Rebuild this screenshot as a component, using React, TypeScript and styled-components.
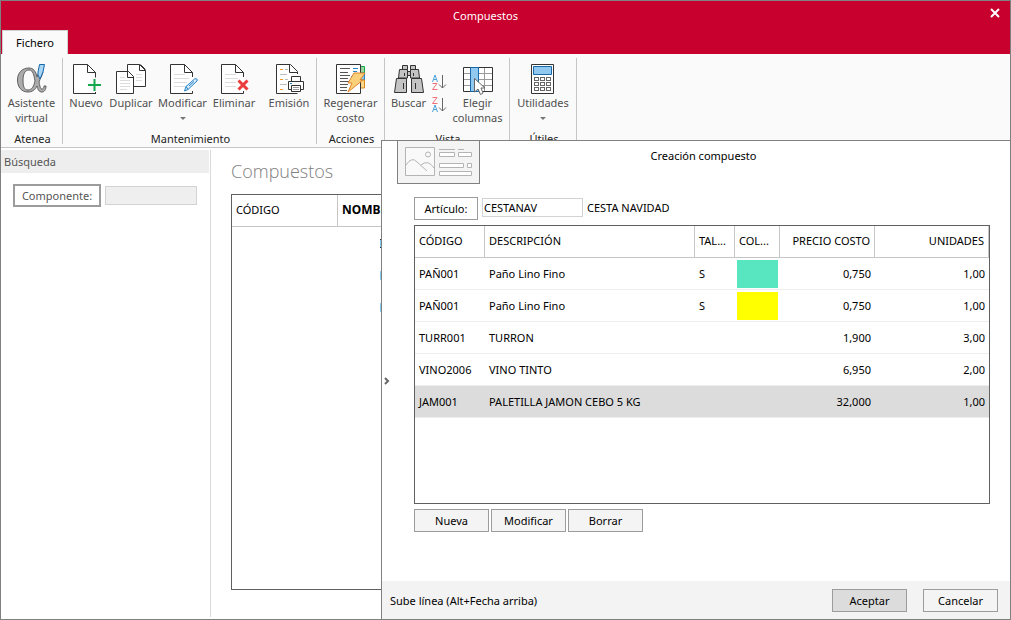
import React from "react";
import styled, { createGlobalStyle, css } from "styled-components";

const Global = createGlobalStyle`
  * { box-sizing: border-box; }
  body { margin: 0; background: #fff; }
  body, button, input { font-family: "Noto Sans", "Open Sans", sans-serif; font-size: 11px; line-height: 15px; color: #000; }
  button { cursor: default; white-space: nowrap; }
`;

const Window = styled.div`
  position: relative;
  display: flex;
  flex-direction: column;
  min-height: 100vh;
  border: 1px solid #808080;
  overflow: hidden;
`;

const TitleBar = styled.header`
  display: grid;
  grid-template-columns: 1fr 40px;
  height: 29px;
  background: #c8002d;
  color: #fff;
`;

const WindowTitle = styled.h1`
  margin: 0;
  font-size: 11px;
  line-height: 30px;
  font-weight: 400;
  text-align: center;
`;

const CloseButton = styled.button`
  display: flex;
  justify-content: center;
  align-items: center;
  padding: 0 0 6px 9px;
  border: 0;
  background: none;
`;

const TabStrip = styled.nav`
  display: flex;
  height: 24px;
  padding-left: 1px;
  background: #c8002d;
`;

const Tab = styled.button`
  width: 66px;
  padding: 0;
  border: 1px solid #d0d0d0;
  border-width: 1px 1px 0;
  background: #fafafa;
`;

const Ribbon = styled.div`
  display: flex;
  height: 94px;
  padding-top: 4px;
  background: #fafafa;
  border-bottom: 1px solid #c6c6c6;
`;

const Group = styled.section<{ $width: number }>`
  display: flex;
  flex-direction: column;
  flex: none;
  width: ${(p) => p.$width}px;
  height: 86px;
  border-right: 1px solid #c6c6c6;
`;

const GroupTools = styled.div<{ $pad?: number }>`
  display: flex;
  flex: 1;
  padding-left: ${(p) => p.$pad || 0}px;
`;

const GroupName = styled.h2`
  height: 13px;
  margin: 0;
  padding-left: 2px;
  font-size: 11px;
  line-height: 15px;
  font-weight: 400;
  text-align: center;
  color: #222;
`;

const Tool = styled.button<{ $width?: number }>`
  display: flex;
  flex-direction: column;
  align-items: center;
  width: ${(p) => (p.$width ? p.$width + "px" : "100%")};
  flex: none;
  padding: 5px 0 0;
  border: 0;
  background: none;
  color: #505050;
`;

const ToolIcon = styled.svg`
  flex: none;
  width: 32px;
  height: 32px;
  overflow: visible;
`;

const Caret = styled.span`
  width: 0;
  margin-top: 7px;
  border: 3px solid transparent;
  border-top-color: #777;
  border-bottom: 0;
`;

const ToolDivider = styled.span`
  width: 1px;
  height: 60px;
  margin: 6px 0 0 3px;
  background: #dcdcdc;
`;

const SortStack = styled.div`
  display: flex;
  flex-direction: column;
  gap: 6px;
  width: 20px;
  padding-top: 16px;
`;

const SortButton = styled.button`
  display: flex;
  padding: 0;
  border: 0;
  background: none;
`;

const Body = styled.div`
  display: flex;
  flex: 1;
  padding: 2px 0;
`;

const SearchPanel = styled.aside`
  flex: none;
  width: 210px;
  padding-right: 1px;
  border-right: 1px solid #d9d9d9;
`;

const PanelTitle = styled.h2`
  margin: 0;
  padding-left: 3px;
  font-size: 11px;
  font-weight: 400;
  line-height: 23px;
  color: #555;
  background: #eee;
`;

const SearchField = styled.div`
  display: flex;
  align-items: center;
  gap: 4px;
  padding: 11px 12px;
`;

const SearchButton = styled.button`
  width: 88px;
  height: 23px;
  padding: 0;
  border: 2px solid #9c9c9c;
  background: #fff;
  color: #555;
`;

const TextInput = styled.input<{ $muted?: boolean }>`
  min-width: 0;
  height: 19px;
  padding: 0 1px;
  border: 1px solid #d3d3d3;
  background: #fff;
  ${(p) =>
    p.$muted
      ? css`
          flex: 1;
          background: #efefef;
        `
      : css`
          width: 101px;
        `}
`;

const Content = styled.main`
  display: flex;
  flex-direction: column;
  flex: 1;
  padding: 8px 20px 27px;
`;

const PageTitle = styled.h2`
  margin: 0 0 9px;
  font-family: "Open Sans", "Noto Sans", sans-serif;
  font-size: 18px;
  line-height: 27px;
  font-weight: 300;
  color: #808080;
`;

const GridFrame = styled.div`
  flex: 1;
  border: 1px solid #606060;
`;

const Table = styled.table`
  width: 100%;
  table-layout: fixed;
  border-collapse: separate;
  border-spacing: 0;
`;

const Th = styled.th<{ $width?: number; $right?: boolean; $bold?: boolean }>`
  width: ${(p) => (p.$width ? p.$width + "px" : "auto")};
  height: 32px;
  padding: 0 4px 2px;
  border-right: 1px solid #c6c6c6;
  border-bottom: 1px solid #c6c6c6;
  font-size: ${(p) => (p.$bold ? 12 : 11)}px;
  font-weight: ${(p) => (p.$bold ? 700 : 400)};
  text-align: ${(p) => (p.$right ? "right" : "left")};
  white-space: nowrap;
  overflow: hidden;
`;

const Row = styled.tr<{ $selected?: boolean }>`
  background: ${(p) => (p.$selected ? "#dcdcdc" : "#fff")};
`;

const Td = styled.td<{ $right?: boolean }>`
  height: 32px;
  padding: 0 4px;
  border-bottom: 1px solid #ededed;
  text-align: ${(p) => (p.$right ? "right" : "left")};
  white-space: nowrap;
`;

const MarkCell = styled.td`
  height: 32px;
  padding: 0 0 0 42px;
`;

const Mark = styled.div<{ $active: boolean }>`
  width: 9px;
  height: 9px;
  border: 1px solid ${(p) => (p.$active ? "#1c3a4c" : "#8fd3f5")};
  border-width: 1px 0;
  background: #7cc8f0;
`;

const Swatch = styled.div<{ $color: string }>`
  height: 28px;
  margin: 0 -2px;
  background: ${(p) => p.$color};
`;

const Drawer = styled.section`
  position: absolute;
  top: 139px;
  right: 0;
  bottom: 0;
  left: 380px;
  display: flex;
  flex-direction: column;
  border: 1px solid #808080;
  border-width: 1px 0 0 1px;
  background: #fff;
`;

const DrawerHead = styled.header`
  display: grid;
  grid-template-columns: 83px 1fr 83px;
  padding: 0 0 0 15px;
`;

const Thumb = styled.div`
  display: flex;
  justify-content: center;
  align-items: center;
  height: 43px;
  border: 1px solid #808080;
  border-top: 0;
  background: #f4f4f4;
`;

const DrawerTitle = styled.h2`
  margin: 0;
  padding: 7px 0 0;
  font-size: 11px;
  line-height: 15px;
  font-weight: 400;
  text-align: center;
`;

const DrawerBody = styled.div`
  display: grid;
  grid-template-columns: 32px 1fr;
  flex: 1;
  padding-right: 20px;
`;

const Collapse = styled.button`
  align-self: center;
  width: 10px;
  height: 24px;
  padding: 0 0 4px;
  border: 0;
  background: none;
`;

const Form = styled.div`
  display: flex;
  flex-direction: column;
  padding: 13px 0 49px;
`;

const ItemField = styled.div`
  display: flex;
  align-items: flex-start;
  gap: 4px;
  height: 23px;
  margin-bottom: 5px;

  ${TextInput} {
    margin-top: 1px;
  }
`;

const ItemName = styled.span`
  line-height: 21px;
`;

const Action = styled.button<{ $width?: number; $tone?: string }>`
  width: ${(p) => p.$width || 75}px;
  height: 23px;
  padding: 0;
  border: 1px solid #9c9c9c;
  background: ${(p) => p.$tone || "#f4f4f4"};
`;

const Actions = styled.div<{ $gap: number }>`
  display: flex;
  gap: ${(p) => p.$gap}px;
`;

const LineActions = styled(Actions)`
  margin-top: 5px;
`;

const DrawerFoot = styled.footer`
  display: flex;
  justify-content: space-between;
  align-items: center;
  height: 38px;
  padding: 0 12px 0 8px;
  background: #f3f3f3;
`;

const AlphaIcon = () => (
  <ToolIcon viewBox="0 0 32 32" aria-hidden="true">
    <path
      d="M13 5C6 5 1.500 10 1.500 17s4 12 10.500 12c4 0 7-2 9-6 1 4 2 6 5 6 2 0 4-2 4-6h-2c0 2-1 3-2 3-2 0-2-3-3-7 1-3 3-6 4-10h-4l-2 5c-1-6-4-9-8-9Z M13 7c4 0 5 5 6 11-1 5-3 9-7 9-4 0-5-4-5-10S9 7 13 7Z"
      fill="#acacac"
      stroke="#5f5f5f"
      fillRule="evenodd"
    />
    <path d="M23.500 1.500H28.500L27 9L24 16L22 12V9Z" fill="#a8d4f5" stroke="#1769aa" />
  </ToolIcon>
);

const NewIcon = () => (
  <ToolIcon viewBox="0 0 32 32" aria-hidden="true">
    <path d="M25.500 30.500H3.500V1.500H17.500L25.500 9.500V14.500" fill="#fff" stroke="#333" />
    <path d="M17.500 1.500V9.500H25.500M25.500 29V31" fill="none" stroke="#333" />
    <path d="M24.500 15V29M17 22H31" stroke="#fafafa" strokeWidth="4" />
    <path d="M24.500 16V28M18 22H31" stroke="#12a84b" strokeWidth="2" />
  </ToolIcon>
);

const CopyIcon = () => (
  <ToolIcon viewBox="0 0 32 32" aria-hidden="true">
    <path d="M12.500 1.500H24.500L30.500 7.500V23.500H12.500Z" fill="#fff" stroke="#333" />
    <path d="M24.500 1.500V7.500H30.500M25.500 1.500L30.500 6.500" fill="none" stroke="#333" />
    <path d="M21 11.500H27M21 14.500H27M21 17.500H27" stroke="#dcdcdc" />
    <path d="M1.500 8.500H13.500L18.500 13.500V30.500H1.500Z" fill="#fff" stroke="#333" />
    <path d="M12.500 8.500V14.500H18.500M13.500 8.500L18.500 13.500" fill="none" stroke="#333" />
    <path d="M5 14.500H10M5 17.500H15M5 20.500H15M5 23.500H15M5 26.500H12" stroke="#dcdcdc" />
  </ToolIcon>
);

const EditIcon = () => (
  <ToolIcon viewBox="0 0 32 32" aria-hidden="true">
    <path d="M25.500 14V9.500L17.500 1.500H3.500V30.500H25.500V28" fill="#fff" stroke="#333" />
    <path d="M17.500 1.500V9.500H25.500" fill="none" stroke="#333" />
    <path d="M7 11.500H18M7 15.500H22M7 19.500H20M7 23.500H18" stroke="#dcdcdc" />
    <path d="M17.500 28L19 23.500L27.500 16Q31 15 30 18L21 26.500Z" fill="#d8ecfb" stroke="#2583c4" />
    <path d="M19 23.500L21 26.500M22 23L27 18.500" stroke="#2583c4" />
  </ToolIcon>
);

const DeleteIcon = () => (
  <ToolIcon viewBox="0 0 32 32" aria-hidden="true">
    <path d="M25.500 14V9.500L17.500 1.500H3.500V30.500H25.500V28" fill="#fff" stroke="#333" />
    <path d="M17.500 1.500V9.500H25.500" fill="none" stroke="#333" />
    <path d="M7 11.500H18M7 15.500H20M7 19.500H18M7 23.500H18" stroke="#dcdcdc" />
    <path d="M20 18L29 26M29 18L20 26" stroke="#fafafa" strokeWidth="5" />
    <path d="M20.500 17.500L29.500 26.500M29.500 17.500L20.500 26.500" stroke="#ec3b3b" strokeWidth="3" />
  </ToolIcon>
);

const PrintIcon = () => (
  <ToolIcon viewBox="0 0 32 32" aria-hidden="true">
    <path d="M24.500 30.500H3.500V1.500H17.500L24.500 8.500V11" fill="#fff" stroke="#333" />
    <path d="M16.500 1.500V9.500H24" fill="none" stroke="#333" />
    <path d="M7 6.500H10M7 16.500H10M7 26.500H10" stroke="#f39a1e" />
    <path d="M12 6.500H15M7 11.500H14M12 16.500H15M7 21.500H14" stroke="#bdbdbd" />
    <path d="M18.500 19V13.500H27.500V19M15.500 18.500H30.500V26.500H15.500Z" fill="#fff" stroke="#333" />
    <path d="M18.500 22.500H27.500V28.500H18.500Z" fill="#fff" stroke="#333" />
    <path d="M20 24.500H26M20 26.500H26" stroke="#999" />
    <path d="M17 20.500H19" stroke="#2583c4" />
  </ToolIcon>
);

const RefreshCostIcon = () => (
  <ToolIcon viewBox="0 0 32 32" aria-hidden="true">
    <path d="M25 3.500H29.500V10H25Z" fill="#9bd3a0" stroke="#12a84b" />
    <path d="M25 10H29.500V17H25Z" fill="#8ec5ee" stroke="#2583c4" />
    <path d="M25 17H29.500V25H25Z" fill="#fbd58a" stroke="#d98a1c" />
    <path d="M1.500 1.500H25.500V30.500H1.500Z" fill="#fff" stroke="#333" />
    <path d="M5 5.500H15M5 9.500H13M5 12.500H15M5 15.500H13M5 18.500H14M5 21.500H13M5 24.500H12M5 27.500H12" stroke="#555" />
    <path d="M18 5.500H23M18 8.500H22M16 13.500H19" stroke="#2583c4" />
    <path d="M19 10H30L25 17H28L13 29L17 20H13Z" fill="#fbd07a" stroke="#e0852b" />
  </ToolIcon>
);

const BinocularsIcon = () => (
  <ToolIcon viewBox="0 0 32 32" aria-hidden="true">
    <g fill="#c4c4c4" stroke="#333">
      <path d="M9.500 2.500H14.500V6.500H9.500ZM17.500 2.500H22.500V6.500H17.500Z" />
      <path d="M6.500 6.500H14.500V15H5.500ZM17.500 6.500H25.500L26.500 15H17.500Z" />
      <path d="M14.500 8.500H17.500V12.500H14.500Z" />
      <path d="M3.500 15.500H13.500V29.500H1.500ZM18.500 15.500H28.500L30.500 29.500H18.500Z" />
      <path d="M10.500 20V26M22.500 20V26M11.500 10V13M20.500 10V13" />
    </g>
  </ToolIcon>
);

const ColumnsIcon = () => (
  <ToolIcon viewBox="0 0 32 32" aria-hidden="true">
    <path d="M1.500 4.500H30.500V28.500H1.500Z" fill="#fff" stroke="#333" />
    <path d="M2 10.500H30M2 16.500H30M2 22.500H30M22.500 5V28" stroke="#999" fill="none" />
    <path d="M8.500 4.500H16.500V28.500H8.500Z" fill="#90c8f0" stroke="#1769aa" />
    <path d="M12.500 15.500V29L16 26L18.500 31.500L21 30L19 25H23Z" fill="#fff" stroke="#666" />
  </ToolIcon>
);

const CalculatorIcon = () => (
  <ToolIcon viewBox="0 0 32 32" aria-hidden="true">
    <path d="M4.500 1.500H26.500V30.500H4.500Z" fill="#fff" stroke="#333" />
    <path d="M6.500 3.500H24.500V11.500H6.500Z" fill="#90c8f0" stroke="#1769aa" />
    {[14.5, 19.5, 24.5].map((y) =>
      [7.5, 13.5, 19.5].map((x) => (
        <rect key={`${x}-${y}`} x={x} y={y} width="4" height="3" fill="#fff" stroke="#666" />
      ))
    )}
  </ToolIcon>
);

const LetterA = ({ y }: { y: number }) => (
  <path d={`M0.500 ${y + 7}L3 ${y}L5.500 ${y + 7}M1.500 ${y + 4.5}H4.500`} fill="none" stroke="#4fa3d8" />
);
const LetterZ = ({ y }: { y: number }) => (
  <path d={`M0.500 ${y + 0.5}H5L0.500 ${y + 6.5}H5.500`} fill="none" stroke="#f07078" />
);
const SortIcon = ({ descending = false }) => (
  <svg width="15" height="17" viewBox="0 0 15 17" aria-hidden="true">
    {descending ? <LetterZ y={0} /> : <LetterA y={1} />}
    {descending ? <LetterA y={8} /> : <LetterZ y={9} />}
    <path d="M10.500 1V14M7 10.500L10.500 14L14 10.500" fill="none" stroke="#666" />
  </svg>
);

const PictureIcon = () => (
  <svg width="69" height="32" viewBox="0 0 69 32" fill="none" stroke="#b4b4b4" aria-hidden="true">
    <path d="M1.500 1.500H30.500V29.500H1.500Z" fill="#f9f9f9" />
    <circle cx="24" cy="8.500" r="2.500" />
    <path d="M2 19Q8 10 13 16L23 25M17 19Q24 13 30 22" />
    <g>
      <path d="M35 3.500H51M54 3.500H60" />
      <path
        d="M35.500 6.500H50.500V10.500H35.500ZM54.500 6.500H67.500V10.500H54.500ZM35.500 17.500H59.500V21.500H35.500ZM63.500 17.500H67.500V21.500H63.500ZM35.500 25.500H67.500V29.500H35.500Z"
        fill="#fff"
      />
    </g>
  </svg>
);

const lines = [
  { code: "PAÑ001", name: "Paño Lino Fino", size: "S", color: "#58e6c0", cost: "0,750", units: "1,00" },
  { code: "PAÑ001", name: "Paño Lino Fino", size: "S", color: "#ffff00", cost: "0,750", units: "1,00" },
  { code: "TURR001", name: "TURRON", size: "", color: "", cost: "1,900", units: "3,00" },
  { code: "VINO2006", name: "VINO TINTO", size: "", color: "", cost: "6,950", units: "2,00" },
  { code: "JAM001", name: "PALETILLA JAMON CEBO 5 KG", size: "", color: "", cost: "32,000", units: "1,00" },
];

export default function App() {
  return (
    <>
      <Global />
      <Window>
        <TitleBar>
          <WindowTitle>Compuestos</WindowTitle>
          <CloseButton aria-label="Cerrar">
            <svg width="10" height="10" viewBox="0 0 10 10" aria-hidden="true">
              <path d="M1 1L9 9M9 1L1 9" stroke="#fff" strokeWidth="2" />
            </svg>
          </CloseButton>
        </TitleBar>
        <TabStrip>
          <Tab>Fichero</Tab>
        </TabStrip>
        <Ribbon>
          <Group $width={62}>
            <GroupTools>
              <Tool><AlphaIcon />Asistente<br />virtual</Tool>
            </GroupTools>
            <GroupName>Atenea</GroupName>
          </Group>
          <Group $width={254}>
            <GroupTools $pad={3}>
              <Tool $width={40}><NewIcon />Nuevo</Tool>
              <Tool $width={50}><CopyIcon />Duplicar</Tool>
              <Tool $width={53}><EditIcon />Modificar<Caret /></Tool>
              <Tool $width={50}><DeleteIcon />Eliminar</Tool>
              <ToolDivider />
              <Tool $width={54}><PrintIcon />Emisión</Tool>
            </GroupTools>
            <GroupName>Mantenimiento</GroupName>
          </Group>
          <Group $width={68}>
            <GroupTools>
              <Tool><RefreshCostIcon />Regenerar<br />costo</Tool>
            </GroupTools>
            <GroupName>Acciones</GroupName>
          </Group>
          <Group $width={125}>
            <GroupTools>
              <Tool $width={47}><BinocularsIcon />Buscar</Tool>
              <SortStack>
                <SortButton aria-label="Orden ascendente"><SortIcon /></SortButton>
                <SortButton aria-label="Orden descendente"><SortIcon descending /></SortButton>
              </SortStack>
              <Tool $width={51}><ColumnsIcon />Elegir<br />columnas</Tool>
            </GroupTools>
            <GroupName>Vista</GroupName>
          </Group>
          <Group $width={67}>
            <GroupTools>
              <Tool><CalculatorIcon />Utilidades<Caret /></Tool>
            </GroupTools>
            <GroupName>Útiles</GroupName>
          </Group>
        </Ribbon>
        <Body>
          <SearchPanel>
            <PanelTitle>Búsqueda</PanelTitle>
            <SearchField>
              <SearchButton>Componente:</SearchButton>
              <TextInput $muted aria-label="Componente" />
            </SearchField>
          </SearchPanel>
          <Content>
            <PageTitle>Compuestos</PageTitle>
            <GridFrame>
              <Table>
                <thead>
                  <tr>
                    <Th $width={106}>CÓDIGO</Th>
                    <Th $bold>NOMBRE</Th>
                  </tr>
                </thead>
                <tbody>
                  {[true, false, false].map((active, i) => (
                    <tr key={i}>
                      <td />
                      <MarkCell><Mark $active={active} /></MarkCell>
                    </tr>
                  ))}
                </tbody>
              </Table>
            </GridFrame>
          </Content>
        </Body>
        <Drawer role="dialog" aria-label="Creación compuesto">
          <DrawerHead>
            <Thumb><PictureIcon /></Thumb>
            <DrawerTitle>Creación compuesto</DrawerTitle>
          </DrawerHead>
          <DrawerBody>
            <Collapse aria-label="Contraer">
              <svg width="6" height="8" viewBox="0 0 6 8" aria-hidden="true">
                <path d="M1 1L4 4L1 7" fill="none" stroke="#666" strokeWidth="2" />
              </svg>
            </Collapse>
            <Form>
              <ItemField>
                <Action $width={64} $tone="#fff">Artículo:</Action>
                <TextInput defaultValue="CESTANAV" aria-label="Artículo" />
                <ItemName>CESTA NAVIDAD</ItemName>
              </ItemField>
              <GridFrame>
                <Table>
                  <thead>
                    <tr>
                      <Th $width={70}>CÓDIGO</Th>
                      <Th>DESCRIPCIÓN</Th>
                      <Th $width={40}>TAL...</Th>
                      <Th $width={45}>COL...</Th>
                      <Th $width={95} $right>PRECIO COSTO</Th>
                      <Th $width={114} $right>UNIDADES</Th>
                    </tr>
                  </thead>
                  <tbody>
                    {lines.map((l, i) => (
                      <Row key={i} $selected={i === lines.length - 1}>
                        <Td>{l.code}</Td>
                        <Td>{l.name}</Td>
                        <Td>{l.size}</Td>
                        <Td>{l.color && <Swatch $color={l.color} />}</Td>
                        <Td $right>{l.cost}</Td>
                        <Td $right>{l.units}</Td>
                      </Row>
                    ))}
                  </tbody>
                </Table>
              </GridFrame>
              <LineActions $gap={2}>
                <Action>Nueva</Action>
                <Action>Modificar</Action>
                <Action>Borrar</Action>
              </LineActions>
            </Form>
          </DrawerBody>
          <DrawerFoot>
            <span>Sube línea (Alt+Fecha arriba)</span>
            <Actions $gap={16}>
              <Action $tone="#dcdcdc">Aceptar</Action>
              <Action>Cancelar</Action>
            </Actions>
          </DrawerFoot>
        </Drawer>
      </Window>
    </>
  );
}
